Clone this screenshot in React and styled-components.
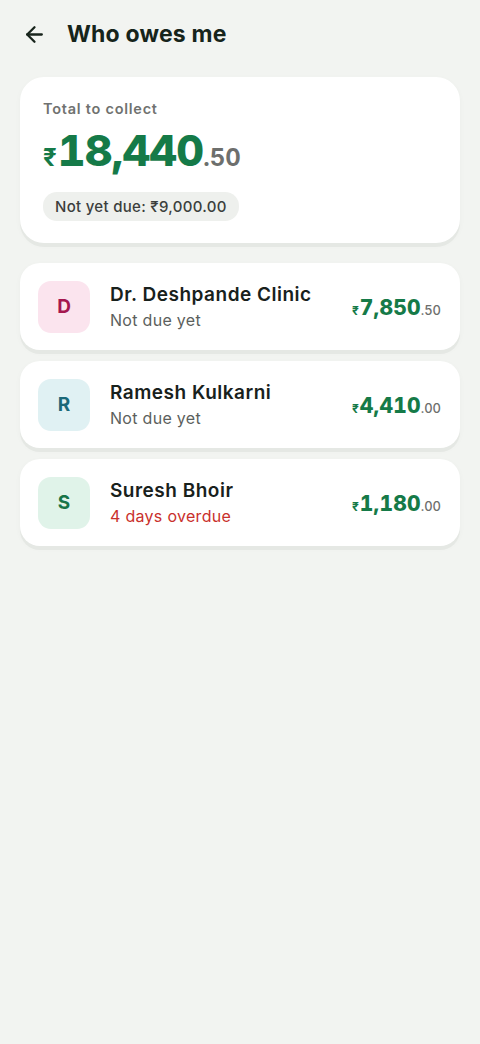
import React from 'react';
import styled, { createGlobalStyle } from 'styled-components';
import { ArrowLeft } from 'lucide-react';

const GlobalStyle = createGlobalStyle`
  html, body {
    margin: 0;
    padding: 0;
    background: #f2f4f1;
  }
  body {
    font-family: Inter, "Noto Sans", sans-serif;
    color: #18241c;
  }
`;

const Page = styled.div`
  min-height: 1044px;
  background: #f2f4f1;
  padding: 0 20px;
  box-sizing: border-box;
`;

const Header = styled.header`
  display: flex;
  align-items: center;
  gap: 20px;
  height: 68px;
  padding-left: 2px;
`;

const BackButton = styled.button`
  display: flex;
  align-items: center;
  justify-content: center;
  padding: 0;
  border: none;
  background: none;
  color: #18241c;
  cursor: pointer;
`;

const Title = styled.h1`
  margin: 0;
  font-size: 23px;
  font-weight: 700;
  letter-spacing: 0.2px;
  color: #16241b;
`;

const Card = styled.div`
  background: #fff;
  border-radius: ${(p) => p.$radius || 20}px;
  box-shadow: 0 4px 0 #e5e8e4, 0 2px 6px rgba(0, 0, 0, 0.03);
`;

const SummaryCard = styled(Card)`
  margin-top: 9px;
  padding: 23px 23px 22px;
`;

const SummaryLabel = styled.div`
  font-size: 14.5px;
  font-weight: 600;
  color: #707270;
  letter-spacing: 0.75px;
`;

const BigAmount = styled.div`
  display: flex;
  align-items: baseline;
  margin-top: 5px;
  color: #157a48;
  line-height: 56px;
  font-variant-numeric: tabular-nums;
`;

const Rupee = styled.span`
  font-size: ${(p) => p.$size}px;
  font-weight: 700;
  margin-right: 1px;
`;

const Whole = styled.span`
  font-size: ${(p) => p.$size}px;
  font-weight: 800;
  letter-spacing: ${(p) => (p.$size > 30 ? -0.8 : 0.2)}px;
`;

const Cents = styled.span`
  font-size: ${(p) => p.$size}px;
  font-weight: ${(p) => p.$weight || 600};
  color: #6d6f6d;
`;

const Pill = styled.div`
  display: inline-block;
  margin-top: 6px;
  padding: 5px 12px;
  border-radius: 14px;
  background: #eef0ed;
  color: #3b3e3c;
  font-size: 15px;
  font-weight: 500;
  letter-spacing: 0.3px;
`;

const List = styled.div`
  display: flex;
  flex-direction: column;
  gap: 11px;
  margin-top: 20px;
`;

const Row = styled(Card)`
  display: flex;
  align-items: center;
  height: 87px;
  padding: 0 19px 0 18px;
  box-sizing: border-box;
`;

const Avatar = styled.div`
  width: 52px;
  height: 52px;
  border-radius: 13px;
  display: flex;
  align-items: center;
  justify-content: center;
  background: ${(p) => p.$bg};
  color: ${(p) => p.$fg};
  font-size: 19px;
  font-weight: 700;
  flex-shrink: 0;
`;

const Info = styled.div`
  flex: 1;
  margin-left: 20px;
  display: flex;
  flex-direction: column;
  gap: 4px;
`;

const Name = styled.div`
  font-size: 19px;
  font-weight: 600;
  letter-spacing: 0.5px;
  color: #18211c;
`;

const Status = styled.div`
  font-size: 16px;
  letter-spacing: 0.3px;
  color: ${(p) => (p.$overdue ? '#c9302c' : '#5c5f5d')};
`;

const RowAmount = styled.div`
  display: flex;
  align-items: baseline;
  color: #157a48;
  margin-top: 2px;
  font-variant-numeric: tabular-nums;
`;

const people = [
  { initial: 'D', name: 'Dr. Deshpande Clinic', status: 'Not due yet', whole: '7,850', cents: '.50', bg: '#fbe4ee', fg: '#a5174f' },
  { initial: 'R', name: 'Ramesh Kulkarni', status: 'Not due yet', whole: '4,410', cents: '.00', bg: '#e0f1f3', fg: '#1b6979' },
  { initial: 'S', name: 'Suresh Bhoir', status: '4 days overdue', overdue: true, whole: '1,180', cents: '.00', bg: '#e0f3e9', fg: '#177447' },
];

export default function App() {
  return (
    <Page>
      <GlobalStyle />
      <Header>
        <BackButton aria-label="Back">
          <ArrowLeft size={25} strokeWidth={2.2} />
        </BackButton>
        <Title>Who owes me</Title>
      </Header>

      <SummaryCard $radius={24}>
        <SummaryLabel>Total to collect</SummaryLabel>
        <BigAmount>
          <Rupee $size={24}>₹</Rupee>
          <Whole $size={43}>18,440</Whole>
          <Cents $size={24} $weight={700}>.50</Cents>
        </BigAmount>
        <Pill>Not yet due: ₹9,000.00</Pill>
      </SummaryCard>

      <List>
        {people.map((p) => (
          <Row key={p.name}>
            <Avatar $bg={p.bg} $fg={p.fg}>{p.initial}</Avatar>
            <Info>
              <Name>{p.name}</Name>
              <Status $overdue={p.overdue}>{p.status}</Status>
            </Info>
            <RowAmount>
              <Rupee $size={12}>₹</Rupee>
              <Whole $size={21}>{p.whole}</Whole>
              <Cents $size={13} $weight={500}>{p.cents}</Cents>
            </RowAmount>
          </Row>
        ))}
      </List>
    </Page>
  );
}
